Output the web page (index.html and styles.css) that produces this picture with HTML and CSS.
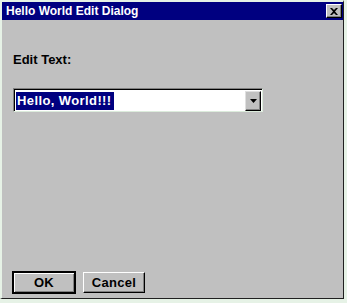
FILE: index.html
```html
<!DOCTYPE html>
<html lang="en">

<head>
  <meta charset="UTF-8">
  <title>Hello World Edit Dialog</title>
  <link rel="stylesheet" href="styles.css">
</head>

<body>
  <div class="dialog">
    <div class="titlebar">
      <span class="title">Hello World Edit Dialog</span>
      <span class="close">
        <svg width="8" height="7" viewBox="0 0 8 7">
          <path d="M0 0h2l2 2 2-2h2L5 3.5 8 7H6L4 5 2 7H0l3-3.5z" fill="#000" />
        </svg>
      </span>
    </div>

    <div class="content">
      <label class="label">Edit Text:</label>

      <div class="combo">
        <span class="combo-value">Hello, World!!!</span>
        <span class="combo-btn">
          <svg width="7" height="4" viewBox="0 0 7 4">
            <path d="M0 0h7L3.5 4z" fill="#000" />
          </svg>
        </span>
      </div>

      <div class="buttons">
        <button class="btn btn-default">OK</button>
        <button class="btn">Cancel</button>
      </div>
    </div>
  </div>
</body>

</html>
```

FILE: styles.css
```css
body {
  margin: 0;
  background: #e6f2e6;
  font-family: "Liberation Sans", Arial, sans-serif;
  font-size: 13px;
  font-weight: bold;
}

.dialog {
  width: 341px;
  height: 296px;
  display: flex;
  flex-direction: column;
  background: #c0c0c0;
  border-top: 2px solid #e6f2e6;
  border-left: 2px solid #e6f2e6;
  border-right: 1px solid #202020;
  border-bottom: 1px solid #202020;
}

.titlebar {
  height: 18px;
  display: flex;
  align-items: center;
  justify-content: space-between;
  padding: 0 1px 0 4px;
  background: #000080;
  color: #fff;
}

.title {
  font-size: 12px;
  letter-spacing: 0;
}

.close {
  width: 14px;
  height: 12px;
  display: flex;
  align-items: center;
  justify-content: center;
  background: #c0c0c0;
  border-top: 1px solid #fff;
  border-left: 1px solid #fff;
  border-right: 1px solid #000;
  border-bottom: 1px solid #000;
  box-shadow: inset -1px -1px 0 #808080;
}

.content {
  flex: 1;
  display: flex;
  flex-direction: column;
  padding: 32px 0 5px 11px;
}

.label {
  color: #000;
  line-height: 15px;
}

.combo {
  margin-top: 21px;
  width: 248px;
  height: 22px;
  display: flex;
  align-items: center;
  justify-content: space-between;
  background: #fff;
  border-top: 1px solid #808080;
  border-left: 1px solid #808080;
  border-right: 1px solid #dcecdc;
  border-bottom: 1px solid #dcecdc;
  box-shadow: inset 1px 1px 0 #000;
}

.combo-value {
  margin-left: 2px;
  margin-top: 1px;
  padding: 1px 2px 1px 1px;
  line-height: 16px;
  background: #000080;
  color: #fff;
  letter-spacing: 0.4px;
}

.combo-btn {
  width: 14px;
  height: 18px;
  margin-right: 1px;
  margin-top: 1px;
  display: flex;
  align-items: center;
  justify-content: center;
  background: #c0c0c0;
  border-top: 1px solid #dfdfdf;
  border-left: 1px solid #dfdfdf;
  border-right: 1px solid #000;
  border-bottom: 1px solid #000;
  box-shadow: inset -1px -1px 0 #808080;
}

.buttons {
  margin-top: auto;
  display: flex;
  gap: 8px;
}

.btn {
  width: 62px;
  height: 21px;
  padding: 0;
  font-family: inherit;
  font-size: 13px;
  font-weight: bold;
  color: #000;
  background: #c0c0c0;
  border-top: 1px solid #fff;
  border-left: 1px solid #fff;
  border-right: 1px solid #000;
  border-bottom: 1px solid #000;
  box-shadow: inset -1px -1px 0 #808080;
  letter-spacing: 0.3px;
}

.btn-default {
  outline: 1px solid #000;
  outline-offset: 0;
  border: 1px solid #000;
  box-shadow: inset 1px 1px 0 #fff, inset -1px -1px 0 #808080;
}
```
